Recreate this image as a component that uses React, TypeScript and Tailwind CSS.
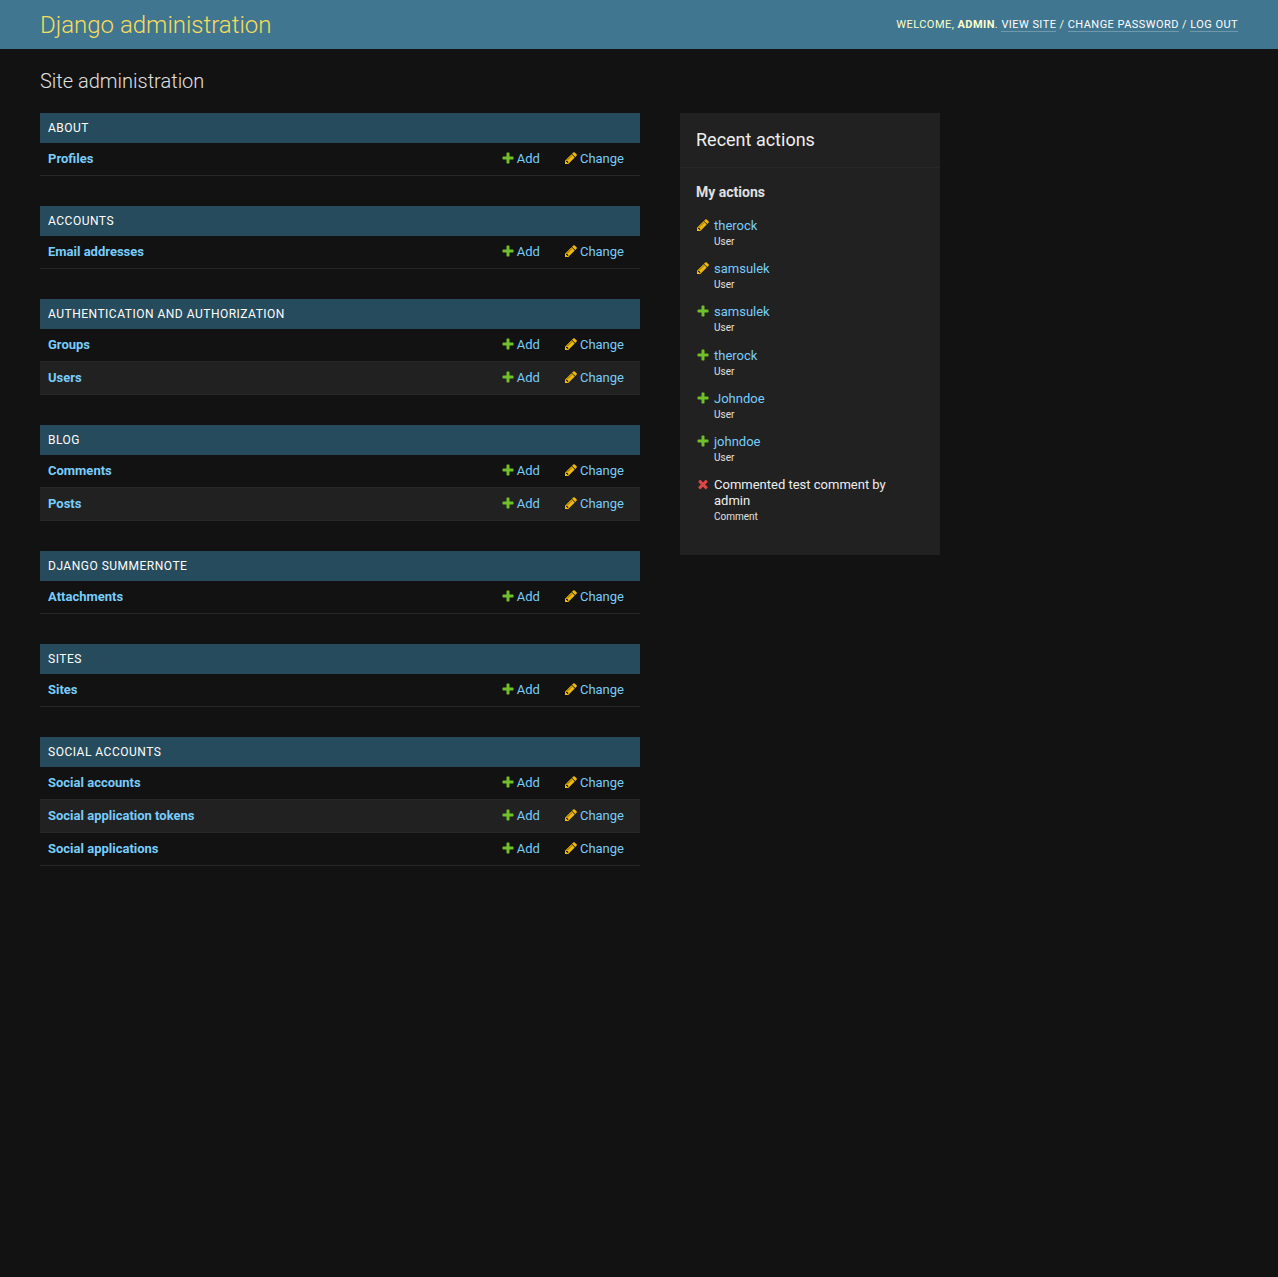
import React from 'react';

const PLUS =
  'M1600 796v192q0 40-28 68t-68 28h-416v416q0 40-28 68t-68 28h-192q-40 0-68-28t-28-68v-416h-416q-40 0-68-28t-28-68v-192q0-40 28-68t68-28h416v-416q0-40 28-68t68-28h192q40 0 68 28t28 68v416h416q40 0 68 28t28 68z';
const PENCIL =
  'M491 1536l91-91-235-235-91 91v107h128v128h107zm523-928q0-22-22-22-10 0-17 7l-542 542q-7 7-7 17 0 22 22 22 10 0 17-7l542-542q7-7 7-17zm-54-192l416 416-832 832h-416v-416zm683 96q0 53-37 90l-166 166-416-416 166-165q36-38 90-38 53 0 91 38l235 234q37 39 37 91z';
const CROSS =
  'M1490 1322q0 40-28 68l-136 136q-28 28-68 28t-68-28l-294-294-294 294q-28 28-68 28t-68-28l-136-136q-28-28-28-68t28-68l294-294-294-294q-28-28-28-68t28-68l136-136q28-28 68-28t68 28l294 294 294-294q28-28 68-28t68 28l136 136q28 28 28 68t-28 68l-294 294 294 294q28 28 28 68z';

const Glyph = ({ d, className }: { d: string; className: string }) => (
  <svg viewBox="0 0 1792 1792" className={`mb-[2px] h-[14px] w-[14px] shrink-0 fill-current ${className}`}>
    <path d={d} />
  </svg>
);

const AddIcon = () => <Glyph d={PLUS} className="text-[#70bf2b]" />;
const ChangeIcon = () => <Glyph d={PENCIL} className="text-[#efb80b]" />;
const DeleteIcon = () => <Glyph d={CROSS} className="text-[#dd4646]" />;

const apps = [
  { name: 'About', models: ['Profiles'] },
  { name: 'Accounts', models: ['Email addresses'] },
  { name: 'Authentication and Authorization', models: ['Groups', 'Users'] },
  { name: 'Blog', models: ['Comments', 'Posts'] },
  { name: 'Django Summernote', models: ['Attachments'] },
  { name: 'Sites', models: ['Sites'] },
  { name: 'Social Accounts', models: ['Social accounts', 'Social application tokens', 'Social applications'] },
];

const actions = [
  { kind: 'change', label: 'therock', type: 'User' },
  { kind: 'change', label: 'samsulek', type: 'User' },
  { kind: 'add', label: 'samsulek', type: 'User' },
  { kind: 'add', label: 'therock', type: 'User' },
  { kind: 'add', label: 'Johndoe', type: 'User' },
  { kind: 'add', label: 'johndoe', type: 'User' },
  { kind: 'delete', label: 'Commented test comment by admin', type: 'Comment' },
];

const AppModule = ({ name, models }: { name: string; models: string[] }) => (
  <section className="mb-[30px]">
    <h2 className="flex h-[30px] items-center bg-[#264b5d] px-2 text-[12px] font-normal uppercase tracking-[0.5px] text-white">
      {name}
    </h2>
    {models.map((model, i) => (
      <div
        key={model}
        className={`flex h-[33px] items-center border-b border-[#272727] pb-px pl-2 pr-4 ${i % 2 === 1 ? 'bg-[#212121]' : ''}`}
      >
        <a className="flex-1 text-[13px] font-bold text-[#78cdfb]">{model}</a>
        <a className="flex items-center gap-[2px] text-[13px] text-[#78cdfb]">
          <AddIcon />
          <span>Add</span>
        </a>
        <a className="ml-[24px] flex items-center gap-[2px] text-[13px] text-[#78cdfb]">
          <ChangeIcon />
          <span>Change</span>
        </a>
      </div>
    ))}
  </section>
);

const RecentActions = () => (
  <aside className="h-[442px] w-[260px] bg-[#212121]">
    <h2 className="flex h-[55px] items-center border-b border-[#272727] px-4 text-[18px] font-normal leading-none text-[#eeeeee]">
      Recent actions
    </h2>
    <div className="px-4 pt-[15px]">
      <h3 className="mb-[17px] text-[14px] font-bold leading-[18px] text-[#e0e0e0]">My actions</h3>
      <ul>
        {actions.map((action, i) => (
          <li key={i} className="mb-[10.6px] flex gap-1">
            <span className="flex h-[16px] items-center">
              {action.kind === 'add' && <AddIcon />}
              {action.kind === 'change' && <ChangeIcon />}
              {action.kind === 'delete' && <DeleteIcon />}
            </span>
            <div>
              <div
                className={`text-[13px] leading-[16px] ${action.kind === 'delete' ? 'text-[#eeeeee]' : 'text-[#78cdfb]'}`}
              >
                {action.label}
              </div>
              <div className="text-[10px] leading-[16.6px] text-[#e0e0e0]">{action.type}</div>
            </div>
          </li>
        ))}
      </ul>
    </div>
  </aside>
);

export default function App() {
  return (
    <div className="min-h-[1277px] bg-[#121212] font-['Roboto',sans-serif]">
      <header className="flex h-[49px] items-center justify-between bg-[#417690] px-10">
        <h1 className="text-[24px] font-light text-[#f5dd5d]">Django administration</h1>
        <div className="pt-[2px] text-[11px] uppercase tracking-[0.45px] text-[#ffc]">
          Welcome, <strong className="font-bold">admin</strong>.{' '}
          <a className="border-b border-white/25 text-white">View site</a> /{' '}
          <a className="border-b border-white/25 text-white">Change password</a> /{' '}
          <a className="border-b border-white/25 text-white">Log out</a>
        </div>
      </header>
      <main className="px-10 pt-[19px]">
        <h1 className="mb-[19px] text-[20px] font-light leading-[26px] text-[#e0e0e0]">Site administration</h1>
        <div className="flex gap-10">
          <div className="w-[600px]">
            {apps.map((app) => (
              <AppModule key={app.name} name={app.name} models={app.models} />
            ))}
          </div>
          <RecentActions />
        </div>
      </main>
    </div>
  );
}
